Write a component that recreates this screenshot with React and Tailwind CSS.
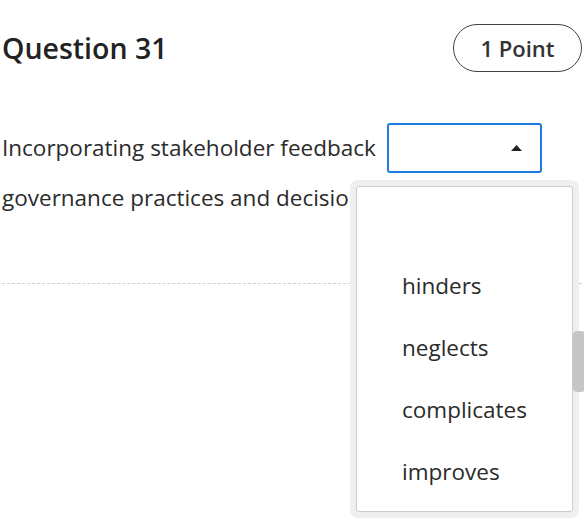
export default function App() {
  const options = ['', 'hinders', 'neglects', 'complicates', 'improves'];

  return (
    <div
      className="relative w-[584px] h-[529px] overflow-hidden bg-white text-[#262626]"
      style={{ fontFamily: '"Open Sans", sans-serif' }}
    >
      <div className="pl-[2px] pr-[2px] pt-[24px]">
        <div className="flex items-center justify-between">
          <h2 className="text-[28.5px] font-semibold leading-none text-[#222]">Question 31</h2>
          <div className="h-[48px] w-[129px] flex items-center justify-center rounded-full border border-[#444] text-[22px] font-semibold text-[#333]">
            1 Point
          </div>
        </div>

        <p className="mt-[51px] text-[22.5px] leading-[50px] text-[#2b2b2b]">
          Incorporating stakeholder feedback{' '}
          <span className="ml-[5px] inline-flex h-[50px] w-[155px] items-center justify-end rounded-[3px] border-2 border-[#1e7be0] pr-[18px] align-top">
            <svg width="11" height="6" viewBox="0 0 11 6">
              <path d="M0 6 L5.5 0 L11 6 Z" fill="#222" />
            </svg>
          </span>{' '}
          governance practices and decision-making.
        </p>

        <div className="mt-[60px] border-t border-dashed border-[#cfcfcf]" />
      </div>

      {/* open dropdown list */}
      <div className="absolute left-[350px] top-[180px] w-[229px] h-[338px] rounded-[8px] bg-[#efefef] p-[6px]">
        <div className="h-full rounded-[3px] border border-[#cccccc] bg-white py-[6px]">
          {options.map((o, i) => (
            <div key={i} className="h-[62px] flex items-center pl-[45px] text-[22.5px] text-[#2b2b2b]">
              {o}
            </div>
          ))}
        </div>
      </div>
      <div className="absolute left-[573px] top-[331px] w-[12px] h-[61px] rounded-[4px] bg-[#c6c6c6]" />
    </div>
  );
}
